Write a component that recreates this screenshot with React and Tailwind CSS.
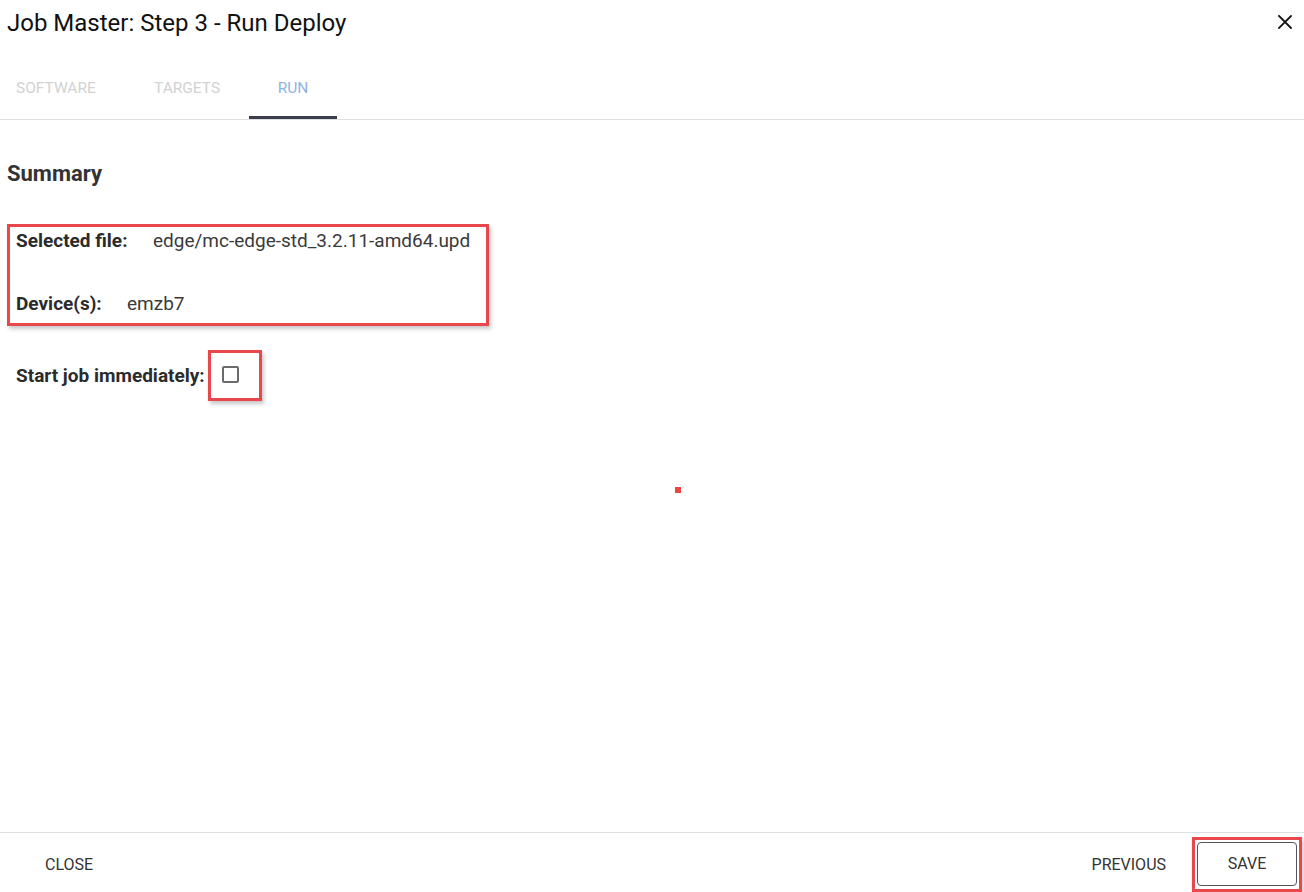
import React from "react";

const red = "border-[3px] border-[#e8474c] shadow-[2px_3px_4px_rgba(0,0,0,0.22)]";

function Tabs() {
  return (
    <div className="flex h-[49px] border-b border-[#e0e0e0] mt-[25px] text-[15.5px] leading-[18px] uppercase">
      <div className="w-[138px] pl-[16px] pt-[8px] text-[#d2d2d2]">Software</div>
      <div className="w-[111px] pl-[16px] pt-[8px] text-[#d2d2d2]">Targets</div>
      <div className="relative w-[88px] pt-[8px] text-center text-[#8fb3e6]">
        Run
        <span className="absolute left-0 right-0 bottom-0 h-[3px] bg-[#3a3e4b]" />
      </div>
    </div>
  );
}

export default function App() {
  return (
    <div
      className="relative h-screen overflow-hidden bg-white flex flex-col text-[#222]"
      style={{ fontFamily: "Roboto, 'Liberation Sans', sans-serif" }}
    >
      {/* Header */}
      <div className="flex items-center justify-between h-[46px] pl-[7px] pr-[12px]">
        <h1 className="text-[24px] leading-[28px] text-[#111]">Job Master: Step 3 - Run Deploy</h1>
        <button className="w-[14px] h-[14px] mt-[-2px]">
          <svg viewBox="0 0 14 14" width="14" height="14" stroke="#111" strokeWidth="1.8" strokeLinecap="square">
            <path d="M1 1L13 13M13 1L1 13" />
          </svg>
        </button>
      </div>
      <Tabs />

      {/* Content */}
      <div className="flex-1 px-[7px]">
        <h2 className="mt-[40px] text-[22px] leading-[28px] font-bold text-[#333]">Summary</h2>

        <div className={`mt-[36px] w-[482px] ${red} pl-[6px] pt-[2px] pb-[7px] text-[19px] leading-[24px]`}>
          <div className="flex">
            <span className="font-bold text-[#2b2b2b] w-[137px]">Selected file:</span>
            <span className="text-[#3a3a3a]">edge/mc-edge-std_3.2.11-amd64.upd</span>
          </div>
          <div className="flex mt-[39px]">
            <span className="font-bold text-[#2b2b2b] w-[111px]">Device(s):</span>
            <span className="text-[#3a3a3a]">emzb7</span>
          </div>
        </div>

        <div className="flex items-center mt-[24px] pl-[9px]">
          <span className="text-[19px] leading-[24px] font-bold text-[#2b2b2b] w-[192px] whitespace-nowrap">
            Start job immediately:
          </span>
          <div className={`${red} w-[54px] h-[51px] flex items-center pl-[11px] pb-[3px]`}>
            <span className="block w-[17px] h-[17px] border-2 border-[#6b6b6b] rounded-[2px]" />
          </div>
        </div>
      </div>

      {/* Footer */}
      <div className="h-[60px] border-t border-[#e0e0e0] flex items-start justify-between pt-[4px] pr-[2px]">
        <div className="h-[55px] flex items-center">
          <button className="ml-[29px] px-[16px] h-[36px] text-[16px] uppercase text-[#333]">Close</button>
        </div>
        <div className="flex items-center h-[55px]">
          <button className="px-[16px] h-[36px] text-[16px] uppercase text-[#333] mr-[10px]">Previous</button>
          <div className="border-[3px] border-[#e8474c] h-[55px] p-[2px] shadow-[2px_3px_4px_rgba(0,0,0,0.22)]">
            <button className="w-[100px] h-[44px] border border-[#555] rounded-[4px] text-[16px] uppercase text-[#333] bg-white">
              Save
            </button>
          </div>
        </div>
      </div>

      {/* stray red marker */}
      <span className="absolute left-[675px] top-[487px] w-[6px] h-[6px] bg-[#ef4444]" />
    </div>
  );
}
